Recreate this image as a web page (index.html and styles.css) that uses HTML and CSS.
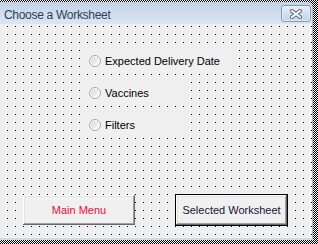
FILE: index.html
```html
<!DOCTYPE html>
<html>
<head>
<meta charset="utf-8">
<link rel="stylesheet" href="styles.css">
</head>
<body>
<div class="frame">
  <div class="window">
    <div class="titlebar">
      <span class="title">Choose a Worksheet</span>
      <button class="close" aria-label="Close">
        <svg width="12" height="10" viewBox="0 0 12 10">
          <path d="M2 2 L10 8 M10 2 L2 8" stroke="#55677c" stroke-width="4" stroke-linecap="square"/>
          <path d="M2 2 L10 8 M10 2 L2 8" stroke="#f6f8fb" stroke-width="2" stroke-linecap="square"/>
        </svg>
      </button>
    </div>
    <div class="client">
      <div class="options">
        <label class="option wide"><svg class="radio" width="12" height="12" viewBox="0 0 12 12"><defs><linearGradient id="rg" x1="0" y1="0" x2="1" y2="1"><stop offset="0" stop-color="#d6d6d6"/><stop offset="1" stop-color="#fcfcfc"/></linearGradient></defs><circle cx="6" cy="6" r="5.5" fill="#fff" stroke="#a8a8a8"/><circle cx="6" cy="6" r="4" fill="url(#rg)"/></svg><span>Expected Delivery Date</span></label>
        <label class="option"><svg class="radio" width="12" height="12" viewBox="0 0 12 12"><circle cx="6" cy="6" r="5.5" fill="#fff" stroke="#a8a8a8"/><circle cx="6" cy="6" r="4" fill="url(#rg)"/></svg><span>Vaccines</span></label>
        <label class="option"><svg class="radio" width="12" height="12" viewBox="0 0 12 12"><circle cx="6" cy="6" r="5.5" fill="#fff" stroke="#a8a8a8"/><circle cx="6" cy="6" r="4" fill="url(#rg)"/></svg><span>Filters</span></label>
      </div>
      <div class="actions">
        <button class="btn main">Main Menu</button>
        <button class="btn default">Selected Worksheet</button>
      </div>
    </div>
  </div>
</div>
</body>
</html>
```

FILE: styles.css
```css
html, body {
  margin: 0;
  padding: 0;
  background: #fff;
}

.frame {
  width: 318px;
  height: 244px;
  box-sizing: border-box;
  padding: 2px 5px 4px 0;
  background: repeating-conic-gradient(#000 0 25%, #fff 0 50%) 0 0 / 2px 2px;
  overflow: hidden;
}

.window {
  width: 313px;
  height: 238px;
  box-sizing: border-box;
  display: flex;
  flex-direction: column;
  border-right: 1px solid #a9b9cb;
  border-bottom: 2px solid #cfdcea;
  border-top-right-radius: 6px;
  overflow: hidden;
  background: #f0f0f0;
}

.titlebar {
  height: 22px;
  box-sizing: border-box;
  padding: 3px 1px 0 4px;
  display: flex;
  justify-content: space-between;
  align-items: flex-start;
  background: linear-gradient(#c3d3e6, #dbe6f3);
}

.title {
  font-family: "Liberation Sans", Arial, sans-serif;
  font-size: 12px;
  line-height: 20px;
  letter-spacing: -0.3px;
  color: #2b3f58;
}

.close {
  width: 30px;
  height: 17px;
  margin: 0;
  padding: 0;
  box-sizing: border-box;
  border: 1px solid #8297b0;
  border-radius: 3px;
  background: linear-gradient(#e4ecf6, #c6d4e5);
  box-shadow: inset 0 0 0 1px rgba(255, 255, 255, 0.45);
  display: flex;
  align-items: center;
  justify-content: center;
}

.client {
  flex: 1;
  background-color: #f0f0f0;
  background-image: conic-gradient(from 270deg at 1px 1px, #000 90deg, transparent 0);
  background-size: 8px 8px;
  background-position: 7px 2px;
  display: flex;
  flex-direction: column;
}

.options {
  margin: 24px 0 0 84px;
  display: flex;
  flex-direction: column;
  gap: 8px;
}

.option {
  width: 104px;
  height: 24px;
  box-sizing: border-box;
  padding: 1px 0 0 5px;
  display: flex;
  align-items: center;
  gap: 4px;
  background: #f0f0f0;
  font-family: "Liberation Sans", Arial, sans-serif;
  font-size: 11px;
  color: #000;
}

.option.wide {
  width: 152px;
}

.radio {
  flex: none;
}

.actions {
  margin: 58px 0 0 23px;
  display: flex;
  align-items: center;
  gap: 40px;
}

.btn {
  margin: 0;
  padding: 0;
  font-family: "Liberation Sans", Arial, sans-serif;
  font-size: 11px;
  background: #f0f0f0;
  border: none;
  box-sizing: border-box;
  box-shadow: inset -1px -1px #696969, inset 1px 1px #ffffff, inset -2px -2px #a0a0a0, inset 2px 2px #e3e3e3;
}

.btn.main {
  width: 112px;
  height: 30px;
  color: #fa0838;
}

.btn.default {
  width: 113px;
  height: 32px;
  border: 1px solid #000;
  color: #14143a;
}
```
